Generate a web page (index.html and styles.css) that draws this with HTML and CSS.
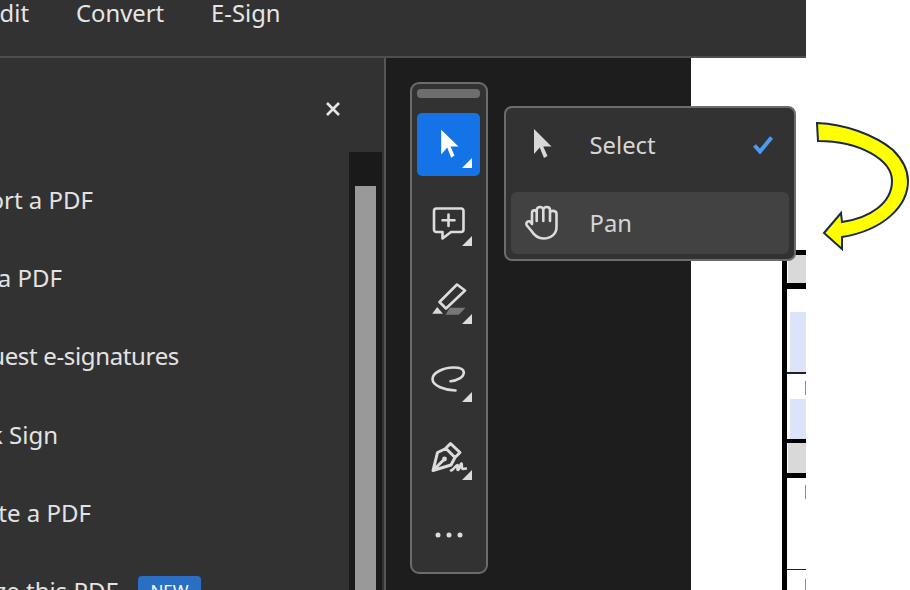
FILE: index.html
```html
<!DOCTYPE html>
<html lang="en">
<head>
<meta charset="utf-8">
<title>PDF viewer tools</title>
<link rel="stylesheet" href="styles.css">
</head>
<body>
<div class="app">
  <header class="topbar">
    <nav class="nav">
      <a class="nav-item nav-edit"><span>Edit</span></a>
      <a class="nav-item">Convert</a>
      <a class="nav-item">E-Sign</a>
    </nav>
  </header>
  <main class="main">
    <aside class="panel">
      <div class="panel-head">
        <svg class="close" viewBox="0 0 16 16" width="16" height="16"><path d="M2 2 14 14M14 2 2 14"/></svg>
      </div>
      <div class="panel-body">
        <ul class="list">
          <li class="row"><span class="label end-93"><span>Export a PDF</span></span></li>
          <li class="row"><span class="label end-62"><span>Edit a PDF</span></span></li>
          <li class="row"><span class="label end-179 tight"><span>Request e-signatures</span></span></li>
          <li class="row"><span class="label end-58"><span>Quick Sign</span></span></li>
          <li class="row"><span class="label end-91"><span>Create a PDF</span></span></li>
          <li class="row"><span class="label end-118"><span>Organize this PDF</span></span><span class="badge">NEW</span></li>
        </ul>
        <div class="track"><div class="thumb"></div></div>
      </div>
    </aside>
    <section class="viewer">
      <div class="page">
        <div class="sheet">
          <div class="t-top"></div>
          <div class="t-gray g1"></div>
          <div class="t-thick"></div>
          <div class="t-white w1"></div>
          <div class="t-blue b1"></div>
          <div class="t-thin"></div>
          <div class="t-white w2"><i class="tick"></i></div>
          <div class="t-blue b2"></div>
          <div class="t-thick short"></div>
          <div class="t-gray g2"></div>
          <div class="t-thick mid"></div>
          <div class="t-white w3"><i class="tick"></i></div>
          <div class="t-thin"></div>
          <div class="t-white w4"><i class="tick low"></i></div>
        </div>
      </div>
    </section>
  </main>

  <div class="toolbar">
    <div class="handle"></div>
    <button class="tool active">
      <svg class="icon" viewBox="0 0 36 36"><path class="solid-w" d="M10.2 2.8V27.5L16.2 20.5 20.2 30.8 23.5 28.5 19.5 19.5H27.5Z"/></svg>
      <i class="corner"></i>
    </button>
    <button class="tool">
      <svg class="icon" viewBox="0 0 36 36"><path class="line" d="M5.5 3.5H30A2.5 2.5 0 0 1 32.5 6V24.500A2.500 2.500 0 0 1 30 27H20L11.500 33.500V27H5.500A2.500 2.500 0 0 1 3 24.500V6A2.500 2.500 0 0 1 5.500 3.500ZM17.500 9.500V21M11.500 15.200H23.500"/></svg>
      <i class="corner"></i>
    </button>
    <button class="tool">
      <svg class="icon" viewBox="0 0 36 36">
        <path class="line" d="M26 1.500 34 7.500 15 25.500 8.500 19Z"/>
        <path class="solid" d="M1.200 30.800 6.200 24 12 30.800Z"/>
        <path class="solid-d" d="M18.800 24.800H34.500L27.800 31.800H14.500Z"/>
      </svg>
      <i class="corner"></i>
    </button>
    <button class="tool">
      <svg class="icon" viewBox="0 0 36 36"><path class="line" d="M19.500 20.200C26 20 33 16 32.800 11.200 32.500 7 26 6.500 22.500 6.500 12 6.500 1.500 12 1.500 18 1.500 25 14 29 24.500 29.500"/></svg>
      <i class="corner"></i>
    </button>
    <button class="tool">
      <svg class="icon" viewBox="0 0 36 36">
        <path class="line bold" d="M2 31.500 6.500 13.500 15 9.500 24 18.500 20 26 2 31.500ZM14.500 9.500 19.500 4.500 29 13.500 24 18.500M2.500 31 12.500 21"/>
        <circle class="solid" cx="13.500" cy="20" r="2.400"/>
        <path class="line" d="M20 31.500C23 31 25 25.500 26.500 26 27.500 26.500 25.500 31 27 31 28.500 31 29.500 24 30.500 24.500 31.500 25 30 30 32 30L35 29.500"/>
      </svg>
      <i class="corner"></i>
    </button>
    <button class="tool">
      <svg class="dots" viewBox="0 0 28 6" width="28" height="6"><circle cx="3" cy="3" r="2.500"/><circle cx="14" cy="3" r="2.500"/><circle cx="25" cy="3" r="2.500"/></svg>
    </button>
  </div>

  <div class="menu">
    <div class="menu-item">
      <svg class="menu-icon" viewBox="0 0 36 36"><path class="solid" d="M10 2V27L15.700 20.500 20 31 23.500 29 19.300 19.500H27.500Z"/></svg>
      <span class="menu-text">Select</span>
      <svg class="check" viewBox="0 0 24 20" width="24" height="20"><path d="M3.500 10.500 9 16.500 20.500 2.500"/></svg>
    </div>
    <div class="menu-item hover">
      <svg class="menu-icon" viewBox="0 0 36 36"><path class="line" d="M8 19V8C8 4.500 12.700 4.500 12.700 8V16M12.700 8V5C12.700 1 19.300 1 19.300 5V16M19.300 5C19.300 1 26 1 26 5V16M26 8C26 5 32.500 5 32.500 9V22C32.500 29 27 33.500 19.500 33.500 13 33.500 10 30 7.500 26L2.500 20C1.500 17.500 4 15.500 6 16.500L8 19"/></svg>
      <span class="menu-text">Pan</span>
    </div>
  </div>
</div>

<svg class="arrow" viewBox="0 0 110 140" width="110" height="140">
  <path d="M17 3C45 4 75 15 93 30 103 40 108 50 108 61 108 85 85 110 42 117L42 129 24 113 41 93 42 102C70 98 92 83 92 61 92 40 60 21 18 21Z"/>
</svg>
</body>
</html>
```
FILE: styles.css
```css
* { box-sizing: border-box; }
html, body { margin: 0; height: 100%; }
body {
  position: relative;
  overflow: hidden;
  background: #fff;
  font-family: "Noto Sans", "Open Sans", sans-serif;
}
.app {
  width: 806px;
  height: 590px;
  display: flex;
  flex-direction: column;
  background: #323232;
  color: #e3e3e3;
  overflow: hidden;
}
.topbar {
  height: 58px;
  flex: none;
  border-bottom: 2px solid #4e4e4e;
  overflow: hidden;
}
.nav { display: flex; gap: 47px; height: 26px; align-items: center; }
.nav-item { font-size: 23.800px; line-height: 26px; white-space: nowrap; color: #e6e6e6; }
.nav-edit { width: 29px; display: flex; justify-content: flex-end; }
.main { flex: 1; display: flex; min-height: 0; }
.panel {
  width: 386px;
  flex: none;
  border-right: 2px solid #555;
  display: flex;
  flex-direction: column;
  overflow: hidden;
}
.panel-head {
  height: 94px;
  flex: none;
  display: flex;
  justify-content: flex-end;
  padding: 43px 43px 0 0;
}
.close { fill: none; stroke: #e6e6e6; stroke-width: 2.600; }
.panel-body { flex: 1; display: flex; min-height: 0; padding-right: 2px; }
.list {
  flex: 1;
  list-style: none;
  margin: 0;
  padding: 8px 0 0;
  min-width: 0;
  overflow: hidden;
}
.row {
  height: 78.300px;
  display: flex;
  align-items: center;
  font-size: 24px;
  color: #e3e3e3;
  white-space: nowrap;
}
.label { display: flex; justify-content: flex-end; flex: none; }
.tight { letter-spacing: -0.350px; }
.end-93 { width: 93px; }
.end-62 { width: 62px; }
.end-179 { width: 179px; }
.end-58 { width: 58px; }
.end-91 { width: 91px; }
.end-118 { width: 118px; }
.badge {
  margin-left: 20px;
  width: 63px;
  height: 30px;
  border-radius: 4px;
  background: #2a6fc4;
  color: #fff;
  font-size: 17px;
  line-height: 30px;
  text-align: center;
}
.track { width: 33px; flex: none; background: #1a1a1a; padding: 34px 6px 0 6px; }
.thumb { height: 500px; background: #999; }
.viewer {
  flex: 1;
  background: #1d1d1d;
  display: flex;
  justify-content: flex-end;
}
.page { width: 115px; background: #fff; padding: 192px 0 0 91px; overflow: hidden; }
.sheet { width: 24px; height: 340px; border-left: 5px solid #000; display: flex; flex-direction: column; }
.t-top { height: 5px; flex: none; background: #000; }
.t-gray { flex: none; background: #d9d9d9; margin-left: 1px; }
.g1 { height: 28px; }
.g2 { height: 30px; }
.t-thick { height: 6px; flex: none; background: #000; }
.short { height: 4px; }
.mid { height: 5px; }
.t-thin { height: 1.500px; flex: none; background: #222; }
.t-white { flex: none; position: relative; }
.w1 { height: 23px; }
.w2 { height: 25px; }
.w3 { height: 91px; }
.w4 { height: 22px; }
.t-blue { flex: none; background: #dde3fb; margin-left: 3px; }
.b1 { height: 60px; }
.b2 { height: 40px; }
.tick { position: absolute; left: 18px; top: 7px; width: 1px; height: 14px; background: #b08a50; }
.tick.low { top: 9px; height: 11px; }

.toolbar {
  position: absolute;
  left: 410px;
  top: 82px;
  width: 78px;
  height: 492px;
  background: #323232;
  border: 2px solid #6c6c6c;
  border-radius: 9px;
  padding: 5px 6px 0 5px;
  display: flex;
  flex-direction: column;
  gap: 15px;
}
.handle { height: 9px; background: #6e6e6e; border-radius: 4px; flex: none; }
.tool {
  position: relative;
  width: 63px;
  height: 63px;
  flex: none;
  border: 0;
  padding: 0;
  background: transparent;
  border-radius: 5px;
  display: flex;
  align-items: center;
  justify-content: center;
}
.active { background: #1473e6; }
.icon { width: 36px; height: 36px; }
.line { fill: none; stroke: #dcdcdc; stroke-width: 2.600; stroke-linejoin: round; stroke-linecap: round; }
.bold { stroke-width: 3; }
.solid { fill: #d8d8d8; }
.solid-w { fill: #fff; }
.solid-d { fill: #777; }
.corner {
  position: absolute;
  right: 8px;
  bottom: 8px;
  width: 10px;
  height: 10px;
  background: #dcdcdc;
  clip-path: polygon(100% 0, 100% 100%, 0 100%);
}
.active .corner { background: #fff; }
.dots { fill: #dcdcdc; }

.menu {
  position: absolute;
  left: 504px;
  top: 106px;
  width: 292px;
  height: 155px;
  background: #323232;
  border: 2px solid #6c6c6c;
  border-radius: 8px;
  padding: 6px 5px 5px;
  display: flex;
  flex-direction: column;
  gap: 16px;
}
.menu-item {
  height: 62px;
  flex: none;
  display: flex;
  align-items: center;
  padding: 0 14px 0 13px;
  border-radius: 6px;
}
.menu-item.hover { background: #424242; }
.menu-icon { width: 36px; height: 36px; flex: none; }
.menu-text { margin-left: 29.500px; font-size: 23.800px; color: #d6d6d6; flex: 1; }
.check { fill: none; stroke: #4b9cf0; stroke-width: 4; flex: none; }
.arrow { position: absolute; left: 800px; top: 120px; }
.arrow path { fill: #ffff00; stroke: #1b2b45; stroke-width: 2; stroke-linejoin: miter; }
```
